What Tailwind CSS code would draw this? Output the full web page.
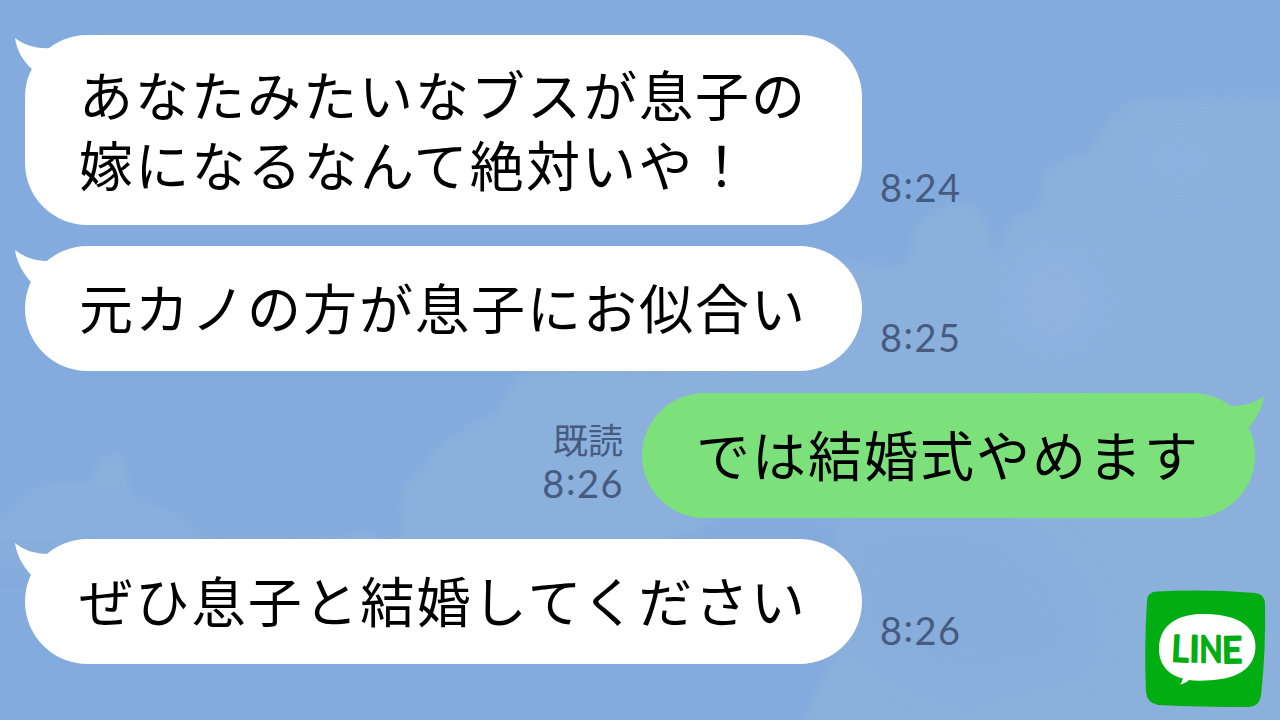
<!DOCTYPE html>
<html lang="ja">
<head>
  <meta charset="UTF-8">
  <meta name="viewport" content="width=device-width, initial-scale=1.0">
  <title>トーク</title>
  <script src="https://cdn.jsdelivr.net/npm/@tailwindcss/browser@4"></script>
</head>
<body class="bg-[#84abdd] font-['Noto_Sans_CJK_JP',sans-serif]">
  <div class="relative w-[1280px] h-[720px] overflow-hidden">
    <!-- Sky -->
    <svg class="absolute inset-0" width="1280" height="720" viewBox="0 0 1280 720">
      <defs>
        <filter id="soft" x="-5%" y="-5%" width="110%" height="110%"><feGaussianBlur stdDeviation="5" /></filter>
        <filter id="softer" x="-30%" y="-30%" width="160%" height="160%"><feGaussianBlur stdDeviation="18" /></filter>
        <linearGradient id="fade" x1="0" y1="480" x2="0" y2="600" gradientUnits="userSpaceOnUse">
          <stop offset="0" stop-color="#8bb0dc" /><stop offset="1" stop-color="#8bb0dc" stop-opacity="0" />
        </linearGradient>
      </defs>
      <g fill="#8bb0dc" filter="url(#soft)">
        <path d="M840 262 L900 266 Q915 255 913 232 Q925 207 960 203 Q988 205 990 240 L998 260 L1010 222 Q1022 212 1040 208 L1044 172 Q1065 155 1090 152 Q1102 118 1132 102 Q1170 94 1290 97 L1290 730 L800 730 L840 640 L830 600 L840 520 L640 520 Z" />
        <path d="M290 560 L298 548 Q310 540 345 538 Q352 531 372 531 L386 544 L403 536 L404 484 Q420 470 428 460 Q440 438 465 430 Q480 415 498 413 Q503 388 530 372 L860 365 L700 530 L640 550 Z" />
        <path d="M-10 522 Q20 500 40 486 Q60 480 90 483 Q100 456 118 450 Q128 460 130 498 Q160 504 180 514 Q210 532 228 570 L-10 620 Z" fill="url(#fade)" />
      </g>
      <g fill="#90b3e0" filter="url(#softer)" opacity="0.8">
        <ellipse cx="1180" cy="160" rx="55" ry="22" />
        <ellipse cx="1055" cy="300" rx="60" ry="65" />
      </g>
      <path d="M840 520 L1000 520 Q1100 590 1080 660 L960 690 L850 640 Z" fill="#86acdb" opacity="0.6" filter="url(#softer)" />
    </svg>

    <!-- Messages -->
    <main class="relative flex flex-col pt-[35px] pl-[25px] pr-[25px] text-[54px] leading-[70px] tracking-[2px] text-black">
      <div class="flex items-end gap-[18px] mb-[21px]">
        <div class="relative w-[837px] h-[190px] pt-[24px] pl-[54px] rounded-[62px] bg-white whitespace-nowrap">
          <svg class="absolute -left-[10px] top-[3px] fill-white" width="60" height="45" viewBox="0 0 60 45"><path d="M0 0 C9 7 21 11 36 10 L50 22 L30 42 L17 31 C8 23 2 13 0 0 Z" /></svg>
          <p>あなたみたいなブスが息子の</p>
          <p class="tracking-[2.2px]">嫁になるなんて絶対いや！</p>
        </div>
        <time class="mb-[15px] font-[Lato,sans-serif] text-[38px] leading-[46px] tracking-[1.5px] text-[#465b80]">8<span class="relative -top-[3px]">:</span>24</time>
      </div>

      <div class="flex items-end gap-[18px] mb-[22px]">
        <div class="relative w-[837px] h-[125px] pt-[26px] pl-[54px] rounded-full bg-white whitespace-nowrap">
          <svg class="absolute -left-[10px] top-[4px] fill-white" width="60" height="45" viewBox="0 0 60 45"><path d="M0 0 C9 7 19 11 34 11 L50 22 L30 42 L16 32 C8 23 2 13 0 0 Z" /></svg>
          <p>元カノの方が息子にお似合い</p>
        </div>
        <time class="mb-[11px] font-[Lato,sans-serif] text-[38px] leading-[46px] tracking-[1.5px] text-[#465b80]">8<span class="relative -top-[3px]">:</span>25</time>
      </div>

      <div class="flex items-end justify-end gap-[18px] mb-[21px]">
        <div class="flex flex-col items-end mb-[12px] text-[#465b80]">
          <span class="mr-px text-[35px] leading-[42px] tracking-normal">既読</span>
          <time class="font-[Lato,sans-serif] text-[38px] leading-[46px] tracking-[1.5px]">8<span class="relative -top-[3px]">:</span>26</time>
        </div>
        <div class="relative w-[613px] h-[125px] pt-[26px] pl-[54px] rounded-full bg-[#7ce17a] whitespace-nowrap">
          <svg class="absolute -right-[9px] top-[3px] fill-[#7ce17a]" width="60" height="45" viewBox="0 0 60 45"><path d="M60 0 C51 7 40 10 26 10 L10 22 L30 42 L45 32 C52 23 58 13 60 0 Z" /></svg>
          <p>では結婚式やめます</p>
        </div>
      </div>

      <div class="flex items-end gap-[18px]">
        <div class="relative w-[837px] h-[125px] pt-[26px] pl-[54px] rounded-full bg-white whitespace-nowrap">
          <svg class="absolute -left-[10px] top-[4px] fill-white" width="60" height="45" viewBox="0 0 60 45"><path d="M0 0 C9 7 19 11 34 11 L50 22 L30 42 L16 32 C8 23 2 13 0 0 Z" /></svg>
          <p class="tracking-[2.25px]">ぜひ息子と結婚してください</p>
        </div>
        <time class="mb-[11px] font-[Lato,sans-serif] text-[38px] leading-[46px] tracking-[1.5px] text-[#465b80]">8<span class="relative -top-[3px]">:</span>26</time>
      </div>
    </main>

    <!-- LINE badge -->
    <svg class="absolute left-[1140px] top-[585px]" width="130" height="130" viewBox="1140 585 130 130">
      <path d="M1157 591.5 Q1205 589 1255 593 Q1265 594 1265 604 Q1266 650 1261 695 Q1260 706 1249 707 Q1200 707 1158 705 Q1147 703 1146 692 Q1144 650 1147 601 Q1147 592 1157 591.5 Z" fill="#01ae12" />
      <path d="M1198 614 C1233 613 1255 623 1255.500 646 C1255.500 669 1236 680 1205 680.500 Q1196 681 1189 680 Q1186 683 1180 684.500 Q1182 682 1183 678.500 C1168 675 1159 664 1159 649 C1159 628 1173 616 1198 614 Z" fill="#fff" />
      <g font-family="Lato, sans-serif" font-weight="400" font-size="36" fill="#01ae12" stroke="#01ae12" stroke-width="2.4" stroke-linejoin="round">
        <text x="1171.500" y="661.500" transform="rotate(3 1180 650)" textLength="17" lengthAdjust="spacingAndGlyphs">L</text>
        <text x="1189.500" y="661.500" transform="rotate(1 1195 650)">I</text>
        <text x="1199.500" y="661.500" textLength="23" lengthAdjust="spacingAndGlyphs">N</text>
        <text x="1222" y="662.500" transform="rotate(-1 1232 650)" textLength="20" lengthAdjust="spacingAndGlyphs">E</text>
      </g>
    </svg>
  </div>
</body>
</html>
